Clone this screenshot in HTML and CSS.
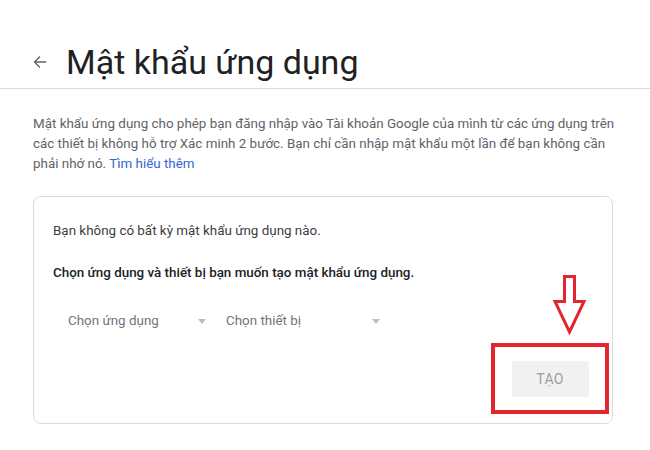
FILE: index.html
```html
<!DOCTYPE html>
<html lang="vi">
<head>
    <meta charset="UTF-8">
    <title>Mật khẩu ứng dụng</title>
    <link rel="stylesheet" href="styles.css">
</head>
<body>
    <header class="page-header">
        <span class="back">
            <svg width="14" height="14" viewBox="0 0 16 16"><path d="M15 7.2H3.6l4.9-4.9L7.4 1.2 0.6 8l6.8 6.8 1.1-1.1-4.9-4.9H15z" fill="#5f6368"/></svg>
        </span>
        <h1>Mật khẩu ứng dụng</h1>
    </header>

    <main class="content">
        <p class="intro">
            Mật khẩu ứng dụng cho phép bạn đăng nhập vào Tài khoản Google của mình từ các ứng dụng trên
            các thiết bị không hỗ trợ Xác minh 2 bước. Bạn chỉ cần nhập mật khẩu một lần để bạn không cần
            phải nhớ nó. <a href="#">Tìm hiểu thêm</a>
        </p>

        <div class="card">
            <p class="empty">Bạn không có bất kỳ mật khẩu ứng dụng nào.</p>
            <p class="prompt">Chọn ứng dụng và thiết bị bạn muốn tạo mật khẩu ứng dụng.</p>

            <div class="selects">
                <div class="select app">Chọn ứng dụng <span class="caret"></span></div>
                <div class="select device">Chọn thiết bị <span class="caret"></span></div>
            </div>

            <div class="actions">
                <div class="highlight">
                    <button class="btn-create">TẠO</button>
                </div>
            </div>

            <!-- annotation arrow -->
            <svg class="pointer" width="34" height="62" viewBox="0 0 34 62">
                <path d="M11.5 1.5h10v25h9.5L16.5 57 2 26.5h9.5z" fill="none" stroke="#e3262d" stroke-width="3" stroke-linejoin="miter"/>
            </svg>
        </div>
    </main>
</body>
</html>
```

FILE: styles.css
```css
body {
    margin: 0;
    background: #fff;
    font-family: Roboto, Arial, sans-serif;
    color: #202124;
}
.page-header {
    display: flex;
    align-items: center;
    height: 89px;
    padding: 36px 0 0 33px;
    border-bottom: 1px solid #dadce0;
    box-sizing: border-box;
}
.back {
    display: flex;
    width: 14px;
    height: 14px;
}
.page-header h1 {
    margin: 0 0 0 19px;
    font-size: 34px;
    font-weight: 400;
    color: #202124;
    line-height: 44px;
}
.content {
    padding: 25px 33px 0 33px;
}
.intro {
    margin: 0;
    font-size: 13.4px;
    line-height: 20px;
    color: #5f6368;
}
.intro a {
    color: #3367d6;
    text-decoration: none;
}
.card {
    position: relative;
    margin-top: 22px;
    width: 580px;
    height: 228px;
    box-sizing: border-box;
    border: 1px solid #dadce0;
    border-radius: 8px;
    padding: 24px 20px 0 19px;
}
.card p {
    margin: 0;
    font-size: 13.4px;
    line-height: 20px;
}
.empty {
    color: #3c4043;
}
.prompt {
    margin-top: 22px !important;
    font-weight: 500;
    color: #202124;
}
.selects {
    display: flex;
    margin-top: 28px;
    padding-left: 15px;
    font-size: 13.4px;
    line-height: 20px;
    color: #70757a;
}
.select {
    display: flex;
    align-items: center;
}
.select.app {
    width: 138px;
    margin-right: 20px;
}
.select.device { width: 154px; }
.caret {
    margin-left: auto;
    width: 0;
    height: 0;
    border-left: 4.5px solid transparent;
    border-right: 4.5px solid transparent;
    border-top: 5px solid #bdbdbd;
}
.actions {
    display: flex;
    justify-content: flex-end;
    margin-top: 12px;
    margin-right: -17px;
}
.highlight {
    border: 4px solid #e3262d;
    width: 110px;
    height: 63px;
    display: flex;
    align-items: center;
    justify-content: center;
}
.btn-create {
    width: 77px;
    height: 36px;
    border: none;
    border-radius: 2px;
    background: #f1f1f1;
    color: #9aa0a6;
    font-family: Roboto, Arial, sans-serif;
    font-size: 14px;
    letter-spacing: 0.3px;
}
.pointer {
    position: absolute;
    left: 519px;
    top: 78px;
}
```
